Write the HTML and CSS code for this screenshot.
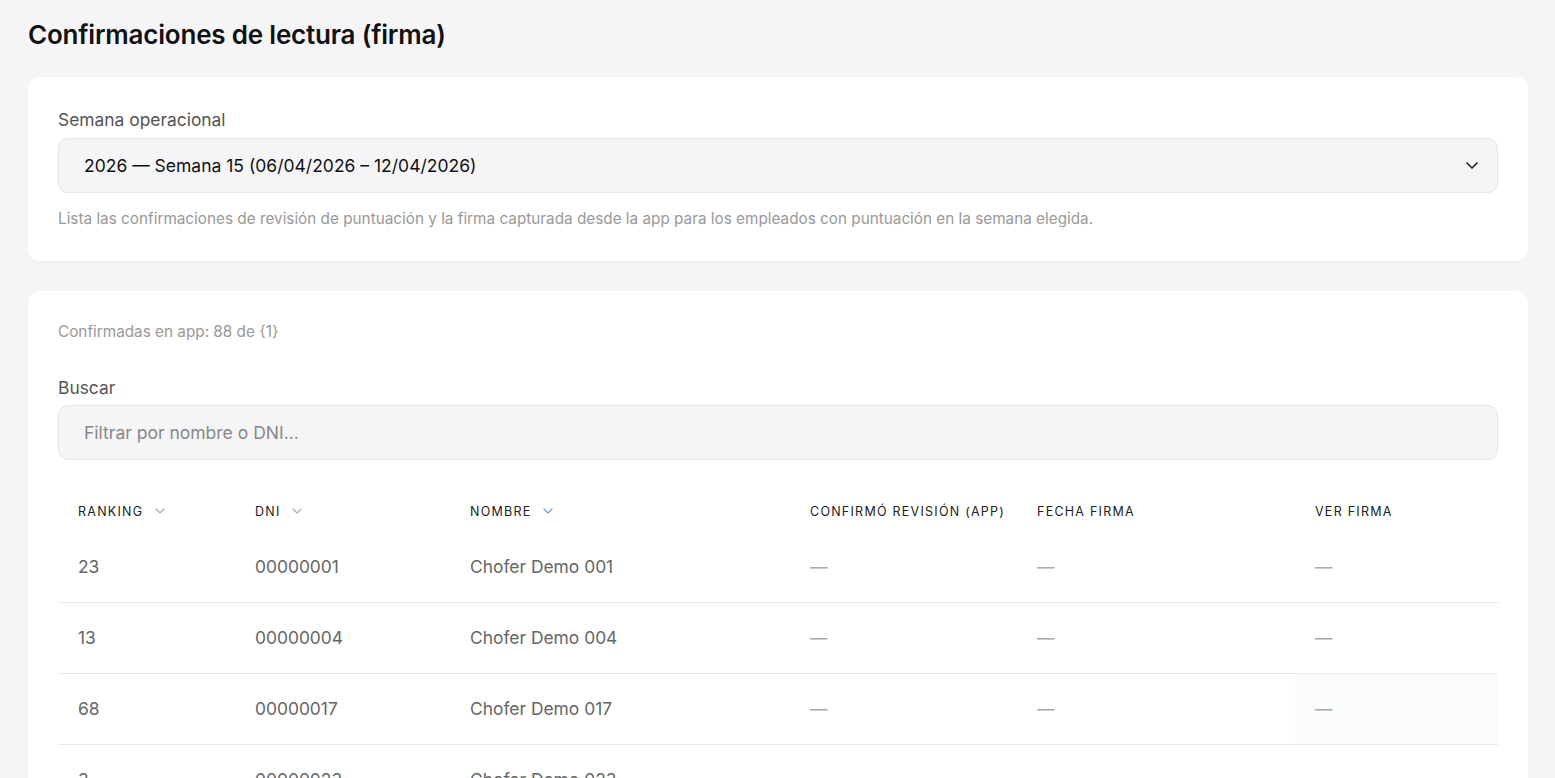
FILE: index.html
```html
<!DOCTYPE html>
<html lang="es">
<head>
  <meta charset="UTF-8" />
  <meta name="viewport" content="width=device-width, initial-scale=1.0" />
  <title>Confirmaciones de lectura (firma)</title>
  <link rel="stylesheet" href="styles.css">
</head>
<body>

<div class="page">
  <h1>Confirmaciones de lectura (firma)</h1>

  <!-- ===== Week selector ===== -->
  <section class="card">
    <label class="field-label" for="week">Semana operacional</label>
    <div class="select-wrap">
      <select id="week">
        <option>2026 — Semana 15 (06/04/2026 – 12/04/2026)</option>
      </select>
      <svg class="chev" width="16" height="16" viewBox="0 0 16 16"><path d="M3 6l5 5 5-5" fill="none" stroke="#222" stroke-width="1.6" stroke-linecap="round" stroke-linejoin="round"/></svg>
    </div>
    <p class="hint">Lista las confirmaciones de revisión de puntuación y la firma capturada desde la app para los empleados con puntuación en la semana elegida.</p>
  </section>

  <!-- ===== Results ===== -->
  <section class="card results">
    <p class="summary">Confirmadas en app: 88 de {1}</p>
    <label class="field-label" for="search">Buscar</label>
    <input id="search" class="text-input" placeholder="Filtrar por nombre o DNI...">

    <table class="grid">
      <thead>
        <tr>
          <th class="c-rank">Ranking <svg class="sort" viewBox="0 0 12 12"><path d="M2 4l4 4 4-4"/></svg></th>
          <th class="c-dni">DNI <svg class="sort" viewBox="0 0 12 12"><path d="M2 4l4 4 4-4"/></svg></th>
          <th class="c-name">Nombre <svg class="sort active" viewBox="0 0 12 12"><path d="M2 4l4 4 4-4"/></svg></th>
          <th class="c-conf">Confirmó revisión (app)</th>
          <th class="c-date">Fecha firma</th>
          <th class="c-sig">Ver firma</th>
        </tr>
      </thead>
      <tbody>
        <tr><td>23</td><td>00000001</td><td>Chofer Demo 001</td><td class="dash">—</td><td class="dash">—</td><td class="dash">—</td></tr>
        <tr><td>13</td><td>00000004</td><td>Chofer Demo 004</td><td class="dash">—</td><td class="dash">—</td><td class="dash">—</td></tr>
        <tr><td>68</td><td>00000017</td><td>Chofer Demo 017</td><td class="dash">—</td><td class="dash">—</td><td class="dash hovered">—</td></tr>
        <tr><td>3</td><td>00000023</td><td>Chofer Demo 023</td><td class="dash">—</td><td class="dash">—</td><td class="dash">—</td></tr>
      </tbody>
    </table>
  </section>
</div>

</body>
</html>
```

FILE: styles.css
```css
* { box-sizing:border-box; margin:0; padding:0; }
body { background:#f5f5f7; color:#111; font-family:Inter,"Noto Sans",Arial,sans-serif; }

.page{ padding:19px 27px 0 28px; }
h1{ font-size:26px; font-weight:600; letter-spacing:-.2px; color:#111; line-height:32px; margin-bottom:26px; }

.card{
  background:#fff; border-radius:12px; padding:32px 30px 32px;
  box-shadow:0 1px 2px rgba(0,0,0,.03); margin-bottom:30px;
}
.results{ padding-top:31px; }

.field-label{ display:block; font-size:17.4px; color:#555; line-height:22px; margin-bottom:7px; }

.select-wrap{ position:relative; }
.select-wrap select{
  width:100%; height:55px; appearance:none; -webkit-appearance:none;
  background:#f5f5f7; border:1px solid #e6e6e8; border-radius:10px;
  padding:0 25px; font:inherit; font-size:17.5px; color:#111;
}
.chev{ position:absolute; right:18px; top:19px; pointer-events:none; }

.hint{ margin-top:16px; font-size:15.3px; color:#999; line-height:20px; }

.summary{ font-size:15.3px; color:#999; line-height:20px; margin-bottom:35px; }

.results .field-label{ margin-bottom:6px; }
.text-input{
  width:100%; height:55px; background:#f5f5f7; border:1px solid #e6e6e8; border-radius:10px;
  padding:0 25px; font:inherit; font-size:17.5px; color:#111;
}
.text-input::placeholder{ color:#888; }

.grid{ width:100%; border-collapse:collapse; table-layout:fixed; margin-top:30px; }
.grid th{
  text-align:left; font-size:12.5px; font-weight:400; text-transform:uppercase;
  letter-spacing:1.25px; color:#222; padding:0 20px; height:42px; white-space:nowrap;
}
.grid td{
  padding:0 20px; height:71px; font-size:17.4px; color:#666; border-bottom:1px solid #e8e8ea;
}
.grid tbody tr:first-child td{ height:70px; }
.grid td.dash{ color:#aaa; }
.grid td.hovered{ background:#fafbfb; }

.c-rank{ width:177px; }
.c-dni{ width:215px; }
.c-name{ width:340px; }
.c-conf{ width:227px; }
.c-date{ width:278px; }

.sort{ width:12px; height:12px; margin-left:6px; vertical-align:-1px; }
.sort path{ fill:none; stroke:#aaa; stroke-width:1.1; stroke-linecap:round; stroke-linejoin:round; }
.sort.active path{ stroke:#5ba3c0; }
```
